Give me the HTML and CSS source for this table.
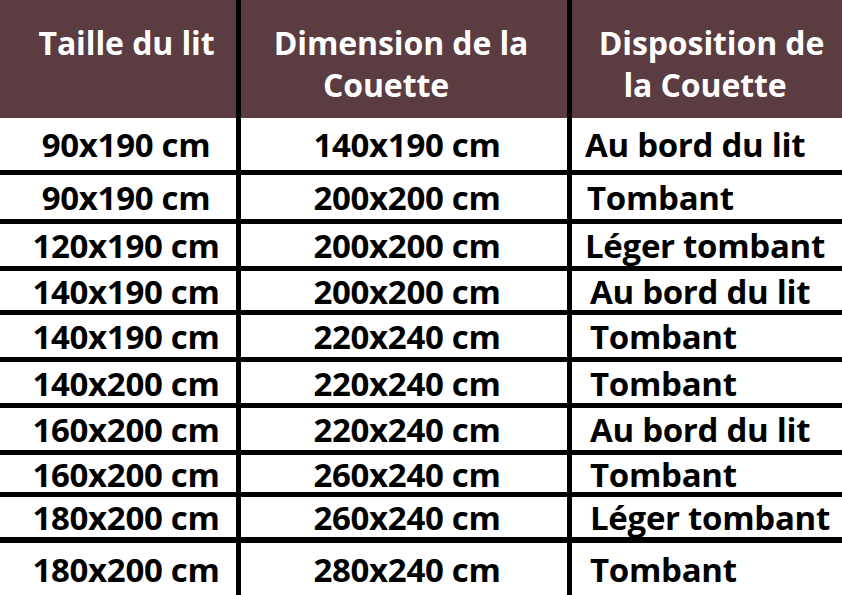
FILE: index.html
```html
<!DOCTYPE html>
<html lang="fr">
<head>
<meta charset="utf-8">
<title>Taille de couette</title>
<link rel="stylesheet" href="styles.css">
</head>
<body>
<div class="table">
  <div class="row head">
    <div class="cell c1"><span class="line">Taille du lit</span></div>
    <div class="cell c2"><span class="line h2a">Dimension de la</span><span class="line h2b">Couette</span></div>
    <div class="cell c3"><span class="line h3a">Disposition de</span><span class="line h3b">la Couette</span></div>
  </div>
  <div class="row r1"><div class="cell c1">90x190 cm</div><div class="cell c2">140x190 cm</div><div class="cell c3">Au bord du lit</div></div>
  <div class="row r2"><div class="cell c1">90x190 cm</div><div class="cell c2">200x200 cm</div><div class="cell c3">Tombant</div></div>
  <div class="row r3"><div class="cell c1">120x190 cm</div><div class="cell c2">200x200 cm</div><div class="cell c3">Léger tombant</div></div>
  <div class="row r4"><div class="cell c1">140x190 cm</div><div class="cell c2">200x200 cm</div><div class="cell c3">Au bord du lit</div></div>
  <div class="row r5"><div class="cell c1">140x190 cm</div><div class="cell c2">220x240 cm</div><div class="cell c3">Tombant</div></div>
  <div class="row r6"><div class="cell c1">140x200 cm</div><div class="cell c2">220x240 cm</div><div class="cell c3">Tombant</div></div>
  <div class="row r7"><div class="cell c1">160x200 cm</div><div class="cell c2">220x240 cm</div><div class="cell c3">Au bord du lit</div></div>
  <div class="row r8"><div class="cell c1">160x200 cm</div><div class="cell c2">260x240 cm</div><div class="cell c3">Tombant</div></div>
  <div class="row r9"><div class="cell c1">180x200 cm</div><div class="cell c2">260x240 cm</div><div class="cell c3">Léger tombant</div></div>
  <div class="row r10"><div class="cell c1">180x200 cm</div><div class="cell c2">280x240 cm</div><div class="cell c3">Tombant</div></div>
</div>
</body>
</html>
```
FILE: styles.css
```css
html, body {
  margin: 0;
  padding: 0;
  background: #ffffff;
}
body {
  width: 842px;
  height: 595px;
  overflow: hidden;
  font-family: "Open Sans", "Liberation Sans", sans-serif;
  font-weight: 700;
  color: #000;
}
.table {
  display: flex;
  flex-direction: column;
  width: 842px;
}
.row {
  display: flex;
  box-sizing: border-box;
  border-top: 5px solid #000;
  font-size: 33px;
  line-height: 40px;
  letter-spacing: -0.3px;
}
.cell {
  display: flex;
  align-items: center;
  box-sizing: border-box;
  padding-top: 2px;
  white-space: nowrap;
}
.c1 {
  width: 236px;
  justify-content: center;
  padding-left: 16px;
}
.c2 {
  width: 331px;
  border-left: 5px solid #000;
  justify-content: center;
  padding-left: 6px;
}
.c3 {
  width: 275px;
  border-left: 5px solid #000;
  padding-left: 18px;
}
.r1 .c3, .r3 .c3 { padding-left: 13px; }
.r2 .c3 { padding-left: 15px; }

.head {
  border-top: none;
  height: 118px;
  background: #5a3c41;
  color: #fff;
  font-size: 32px;
  line-height: 42px;
  letter-spacing: -0.1px;
}
.head .cell {
  flex-direction: column;
  align-items: center;
  justify-content: flex-start;
  padding-top: 22px;
}
.head .c1 { padding-left: 17px; }
.head .c2 { padding-left: 0; }
.head .c3 { padding-left: 0; }
.line { display: block; }
.h2a { margin-right: 6px; }
.h2b { margin-right: 36px; }
.h3a { margin-left: 9px; }
.h3b { margin-right: 4px; }

.r1 { border-top: none; height: 52px; }
.r2 { height: 49px; }
.r3 { height: 47px; }
.r4 { height: 44px; }
.r5 { height: 47px; }
.r6 { height: 46px; }
.r7 { height: 47px; }
.r8 { height: 42px; }
.r9 { height: 45px; }
.r10 { height: 58px; border-top-width: 6px; }
```
